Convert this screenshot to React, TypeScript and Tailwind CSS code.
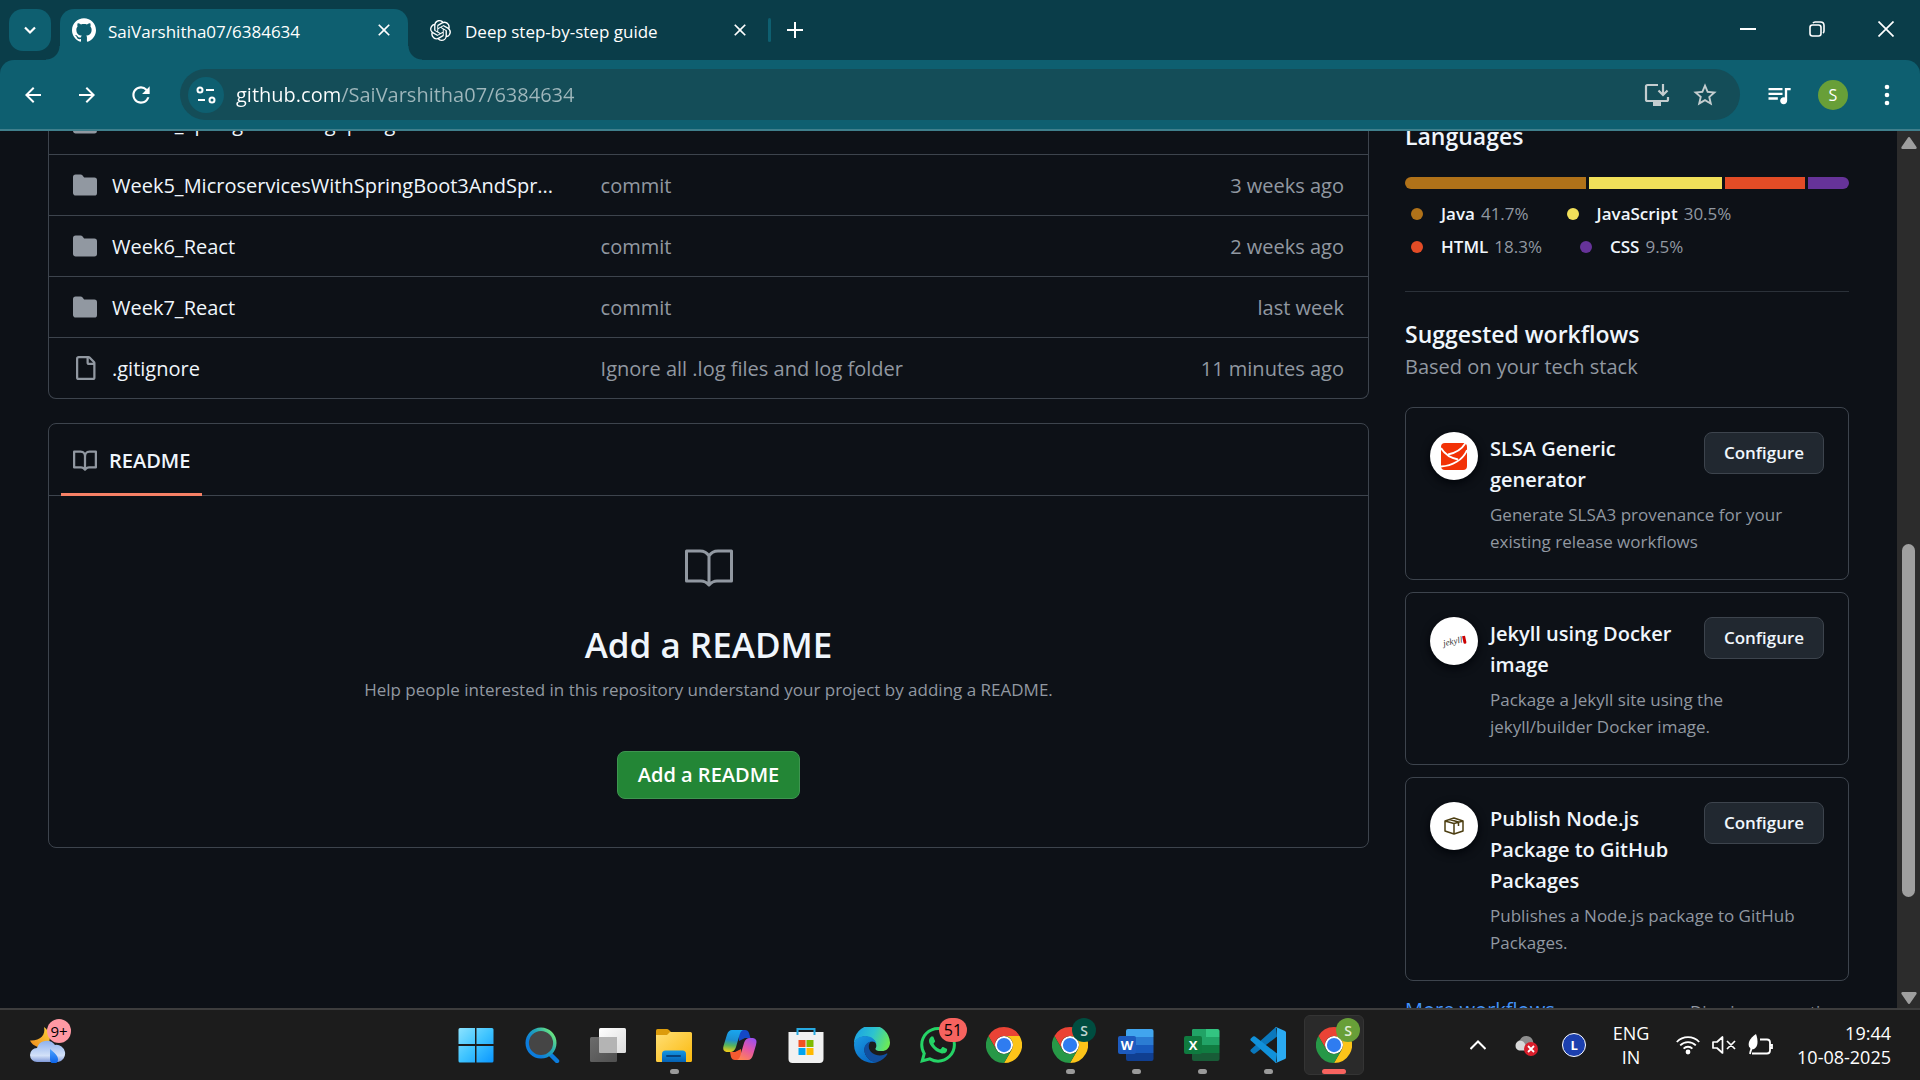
import type { ReactNode } from "react";
import { SiGithub, SiOpenai, SiWhatsapp } from "react-icons/si";
import { MdArrowBack, MdArrowForward, MdClose, MdQueueMusic, MdRefresh, MdStarOutline } from "react-icons/md";

/* ---------- Browser chrome ---------- */

function TabStrip() {
  return (
    <header className="flex h-[60px] shrink-0 items-stretch bg-[#0a3d49] text-white">
      <button aria-label="Search tabs" className="mt-[9px] ml-[9px] flex size-[42px] items-center justify-center rounded-[14px] bg-[#0e5f70]">
        <svg viewBox="0 0 16 16" className="size-4" fill="none" stroke="currentColor" strokeWidth="2.2">
          <path d="M3 5.5 8 10.5 13 5.5" />
        </svg>
      </button>
      <div className="relative mt-[9px] ml-[9px] flex w-[348px] items-center rounded-t-[14px] bg-[#0e5f70] pr-3 pl-3">
        <span className="absolute bottom-0 -left-[14px] size-[14px] bg-[radial-gradient(circle_at_0_0,transparent_13px,#0e5f70_14px)]" />
        <span className="absolute -right-[14px] bottom-0 size-[14px] bg-[radial-gradient(circle_at_100%_0,transparent_13px,#0e5f70_14px)]" />
        <SiGithub className="mb-[9px] size-6" />
        <span className="mb-[6px] ml-3 flex-1 text-[17px]">SaiVarshitha07/6384634</span>
        <button aria-label="Close tab" className="mb-[9px] flex size-6 items-center justify-center">
          <MdClose className="size-5" />
        </button>
      </div>
      <div className="mt-[9px] ml-[22px] flex w-[322px] items-center">
        <SiOpenai className="mb-[9px] size-[21px]" />
        <span className="mb-[6px] ml-[14px] flex-1 text-[17px]">Deep step-by-step guide</span>
        <button aria-label="Close tab" className="mb-[9px] flex size-6 items-center justify-center">
          <MdClose className="size-5" />
        </button>
      </div>
      <span className="mt-[18px] ml-4 h-6 w-[3px] rounded bg-[#0e5f70]" />
      <button aria-label="New tab" className="mt-[18px] ml-3 flex size-6 items-center justify-center">
        <svg viewBox="0 0 16 16" className="size-4" stroke="currentColor" strokeWidth="2">
          <path d="M8 0V16M0 8H16" />
        </svg>
      </button>
      <div className="ml-auto flex h-[58px]">
        <button aria-label="Minimize" className="flex w-[69px] items-center justify-center">
          <svg viewBox="0 0 16 16" className="size-4" stroke="currentColor" strokeWidth="2">
            <path d="M0 8H16" />
          </svg>
        </button>
        <button aria-label="Restore" className="flex w-[69px] items-center justify-center">
          <svg viewBox="0 0 16 16" className="size-4" fill="none" stroke="currentColor" strokeWidth="1.6">
            <rect x="1" y="4" width="11" height="11" rx="2.5" />
            <path d="M4 2.2C4.500 1.300 5 1 6 1H11.500C13.500 1 15 2.500 15 4.500V10C15 11 14.700 11.500 14 12" />
          </svg>
        </button>
        <button aria-label="Close window" className="flex w-[69px] items-center justify-center">
          <svg viewBox="0 0 16 16" className="size-4" stroke="currentColor" strokeWidth="1.700">
            <path d="M.5.500 15.500 15.500M15.500.500.500 15.500" />
          </svg>
        </button>
      </div>
    </header>
  );
}

function Toolbar() {
  return (
    <div className="bg-[#0a3d49]">
      <nav className="flex h-[71px] items-center rounded-t-[14px] border-b-2 border-[#3f7f8c] bg-[#0e5f70] pl-[21px] text-white">
        <button aria-label="Back"><MdArrowBack className="size-6" /></button>
        <button aria-label="Forward" className="ml-[30px]"><MdArrowForward className="size-6" /></button>
        <button aria-label="Reload" className="ml-[29px]"><MdRefresh className="size-[26px]" /></button>
        <div className="ml-[26px] flex h-[51px] flex-1 items-center rounded-full bg-[#144d58] pl-2">
          <button aria-label="Site information" className="flex size-9 items-center justify-center rounded-full bg-[#0e5f70]">
            <svg viewBox="0 0 20 20" className="size-5" fill="none" stroke="currentColor" strokeWidth="2">
              <circle cx="4" cy="5" r="2.500" />
              <path d="M10 5H18M2 15H9" />
              <circle cx="16" cy="15" r="2.500" />
            </svg>
          </button>
          <input
            aria-label="Address"
            defaultValue="github.com/SaiVarshitha07/6384634"
            className="ml-3 min-w-0 flex-1 bg-[linear-gradient(90deg,#ffffff_105px,#9fb7bc_105px)] bg-clip-text text-[20px] text-transparent outline-none"
          />
          <button aria-label="Install" className="text-[#c4cdcf]">
            <svg viewBox="0 0 26 24" className="h-6 w-[26px]" fill="none" stroke="currentColor" strokeWidth="2.200">
              <path d="M14 2H3.500Q2 2 2 3.500V16.500Q2 18 3.500 18H22.500Q24 18 24 16.500V14" />
              <path d="M19 1V11M14.500 7.500 19 12 23.500 7.500" />
              <path d="M9 21H17" strokeWidth="4" />
            </svg>
          </button>
          <button aria-label="Bookmark" className="mx-[21px] text-[#c4cdcf]"><MdStarOutline className="size-7" /></button>
        </div>
        <button aria-label="Media" className="ml-[25px]"><MdQueueMusic className="size-7" /></button>
        <button aria-label="Profile" className="ml-[25px] flex size-[30px] items-center justify-center rounded-full bg-[#689f38] text-[16px]">S</button>
        <button aria-label="Menu" className="mr-[21px] ml-[27px]">
          <svg viewBox="0 0 24 24" className="size-6" fill="currentColor">
            <circle cx="12" cy="4" r="2.300" />
            <circle cx="12" cy="12" r="2.300" />
            <circle cx="12" cy="20" r="2.300" />
          </svg>
        </button>
      </nav>
    </div>
  );
}

/* ---------- Repository page ---------- */

function FolderIcon() {
  return (
    <svg viewBox="0 0 16 16" className="size-6 shrink-0" fill="#9198a1">
      <path d="M1.750 1A1.750 1.750 0 0 0 0 2.750v10.500C0 14.216.784 15 1.750 15h12.500A1.750 1.750 0 0 0 16 13.250v-8.500A1.750 1.750 0 0 0 14.250 3H7.500a.25.25 0 0 1-.2-.1l-.9-1.200C6.070 1.260 5.550 1 5 1H1.750Z" />
    </svg>
  );
}

function FileIcon() {
  return (
    <svg viewBox="0 0 16 16" className="size-6 shrink-0" fill="#9198a1">
      <path d="M2 1.750C2 .784 2.784 0 3.750 0h6.586c.464 0 .909.184 1.237.513l2.914 2.914c.329.328.513.773.513 1.237v9.586A1.750 1.750 0 0 1 13.250 16h-9.500A1.750 1.750 0 0 1 2 14.250Zm1.750-.25a.25.25 0 0 0-.25.25v12.500c0 .138.112.25.25.25h9.500a.25.25 0 0 0 .25-.25V6h-2.750A1.750 1.750 0 0 1 9 4.250V1.500Zm6.750.062V4.250c0 .138.112.25.25.25h2.688l-.011-.013-2.914-2.914-.013-.011Z" />
    </svg>
  );
}

function BookIcon({ size }: { size: string }) {
  return (
    <svg viewBox="0 0 16 16" className={size} fill="#9198a1">
      <path d="M0 1.750A.75.75 0 0 1 .75 1h4.253c1.227 0 2.317.59 3 1.501A3.743 3.743 0 0 1 11.006 1h4.245a.75.75 0 0 1 .75.75v10.500a.75.75 0 0 1-.75.75h-4.507a2.250 2.250 0 0 0-1.591.659l-.622.621a.75.75 0 0 1-1.060 0l-.622-.621A2.250 2.250 0 0 0 5.258 13H.75a.75.75 0 0 1-.75-.75Zm7.251 10.324.004-5.073-.002-2.253A2.250 2.250 0 0 0 5.003 2.500H1.500v9h3.757a3.750 3.750 0 0 1 1.994.574ZM8.755 4.750l-.004 7.322a3.752 3.752 0 0 1 1.992-.572H14.500v-9h-3.495a2.250 2.250 0 0 0-2.250 2.250Z" />
    </svg>
  );
}

function LargeBookIcon() {
  return (
    <svg viewBox="0 0 48 38" className="h-[38px] w-12" fill="none" stroke="#9198a1" strokeWidth="3" strokeLinejoin="round">
      <path d="M24 7Q21 2 15 2H1.500V32H16Q20.500 32 24 36Q27.500 32 32 32H46.500V2H33Q27 2 24 7V34" />
    </svg>
  );
}

const files = [
  { name: "Week4_SpringRestUsingSpringBoot3", message: "commit", age: "last month", folder: true },
  { name: "Week5_MicroservicesWithSpringBoot3AndSpr...", message: "commit", age: "3 weeks ago", folder: true },
  { name: "Week6_React", message: "commit", age: "2 weeks ago", folder: true },
  { name: "Week7_React", message: "commit", age: "last week", folder: true },
  { name: ".gitignore", message: "Ignore all .log files and log folder", age: "11 minutes ago", folder: false },
];

function FileTable() {
  return (
    <div className="rounded-b-lg border border-t-0 border-[#3d444d]">
      <table className="w-full table-fixed text-[20px] leading-[30px]">
        <tbody>
          {files.map((f) => (
            <tr key={f.name} className="h-[61px] border-b border-[#3d444d] last:border-b-0">
              <td className="w-2/5 px-6">
                <div className="flex items-center gap-[15px]">
                  {f.folder ? <FolderIcon /> : <FileIcon />}
                  <a href="#" className="pt-[2px] whitespace-nowrap text-[#f0f6fc]">{f.name}</a>
                </div>
              </td>
              <td className="pt-[2px] pl-6"><a href="#" className="text-[#9198a1]">{f.message}</a></td>
              <td className="w-1/5 pt-[2px] pr-6 text-right text-[#9198a1]">{f.age}</td>
            </tr>
          ))}
        </tbody>
      </table>
    </div>
  );
}

function Readme() {
  return (
    <section className="mt-6 rounded-lg border border-[#3d444d]">
      <div className="flex h-[72px] border-b border-[#3d444d] px-3">
        <a href="#" className="-mb-px flex items-center gap-3 border-b-3 border-[#f78166] px-3 pt-1 text-[20px] font-semibold text-[#f0f6fc]">
          <BookIcon size="size-6" />
          README
        </a>
      </div>
      <div className="flex flex-col items-center pt-[53px] pb-12">
        <LargeBookIcon />
        <h2 className="mt-[31px] text-[35px] leading-[54px] font-semibold text-[#f0f6fc]">Add a README</h2>
        <p className="mt-1 text-[17px] leading-[27px] text-[#9198a1]">
          Help people interested in this repository understand your project by adding a README.
        </p>
        <button className="mt-12 h-12 rounded-lg border border-[#3e9550] bg-[#238636] px-5 text-[20px] font-semibold text-white">
          Add a README
        </button>
      </div>
    </section>
  );
}

const languages = [
  { name: "Java", share: "41.7%", color: "bg-[#b07219]", grow: "grow-[417]" },
  { name: "JavaScript", share: "30.5%", color: "bg-[#f1e05a]", grow: "grow-[305]" },
  { name: "HTML", share: "18.3%", color: "bg-[#e34c26]", grow: "grow-[183]" },
  { name: "CSS", share: "9.5%", color: "bg-[#663399]", grow: "grow-[95]" },
];

function Languages() {
  return (
    <section className="border-b border-[#2b3139] pb-7">
      <h2 className="text-[23px] leading-9 font-semibold text-[#f0f6fc]">Languages</h2>
      <div className="mt-[23px] flex h-3 gap-[3px] overflow-hidden rounded-full">
        {languages.map((l) => (
          <span key={l.name} className={`basis-0 ${l.grow} ${l.color}`} />
        ))}
      </div>
      <ul className="mt-2 flex flex-wrap text-[17px] leading-[33px]">
        {languages.map((l) => (
          <li key={l.name} className="mr-8 flex items-center pl-[6px]">
            <span className={`mr-[18px] size-3 rounded-full ${l.color}`} />
            <span className="font-semibold text-[#f0f6fc]">{l.name}</span>
            <span className="ml-[6px] text-[#9198a1]">{l.share}</span>
          </li>
        ))}
      </ul>
    </section>
  );
}

function SlsaLogo() {
  return (
    <svg viewBox="0 0 26 27" className="h-[27px] w-[26px]">
      <rect width="26" height="27" rx="4" fill="#f23207" />
      <g fill="none" stroke="#fff" strokeWidth="1.800">
        <path d="M0 5C4 12 10 15 17 16.500" />
        <path d="M7 11.500C14 10 21 6 24.500 0" />
        <path d="M0 23.500C11 23 22 17 26 7" />
      </g>
    </svg>
  );
}

function JekyllLogo() {
  return (
    <span className="flex -rotate-12 items-center font-['Liberation_Serif',serif] text-[9px] leading-none text-[#333] italic">
      jekyll
      <span className="h-2 w-[3px] rounded-b bg-[#c00]" />
    </span>
  );
}

function PackageLogo() {
  return (
    <svg viewBox="0 0 20 18" className="h-[18px] w-5" fill="none" stroke="#4d3f12" strokeWidth="1.500" strokeLinejoin="round">
      <path d="M1 4 10 1 19 4V14L10 17 1 14ZM1 4 10 6.500 19 4M10 6.500V17M5.500 2.500 14.500 5V9" />
    </svg>
  );
}

const workflows = [
  { title: "SLSA Generic generator", text: "Generate SLSA3 provenance for your existing release workflows", logo: <SlsaLogo /> },
  { title: "Jekyll using Docker image", text: "Package a Jekyll site using the jekyll/builder Docker image.", logo: <JekyllLogo /> },
  { title: "Publish Node.js Package to GitHub Packages", text: "Publishes a Node.js package to GitHub Packages.", logo: <PackageLogo /> },
];

function Workflows() {
  return (
    <section className="pt-6">
      <h2 className="text-[23px] leading-9 font-semibold text-[#f0f6fc]">Suggested workflows</h2>
      <p className="text-[20px] leading-[30px] text-[#9198a1]">Based on your tech stack</p>
      <div className="mt-[25px] flex flex-col gap-3">
        {workflows.map((w) => (
          <article key={w.title} className="flex gap-3 rounded-lg border border-[#3d444d] p-6">
            <div className="flex size-12 shrink-0 items-center justify-center rounded-full bg-white shadow-[0_3px_8px_#010409]">{w.logo}</div>
            <div className="flex-1">
              <div className="flex items-start">
                <h3 className="max-w-[200px] flex-1 pt-px text-[20px] leading-[31px] font-semibold text-[#f0f6fc]">{w.title}</h3>
                <button className="ml-auto h-[42px] w-[120px] rounded-lg border border-[#3d444d] bg-[#212830] text-[17px] font-semibold text-[#f0f6fc]">
                  Configure
                </button>
              </div>
              <p className="mt-[6px] text-[17px] leading-[27px] text-[#9198a1]">{w.text}</p>
            </div>
          </article>
        ))}
      </div>
      <div className="mt-[14px] flex justify-between text-[17px] leading-[30px]">
        <a href="#" className="text-[20px] text-[#4493f8]">More workflows</a>
        <a href="#" className="pt-[2px] text-[#9198a1]">Dismiss suggestions</a>
      </div>
    </section>
  );
}

function Scrollbar() {
  return (
    <div className="flex w-[23px] shrink-0 flex-col items-center bg-[#2c2c2c] pt-[6px] pb-1" aria-hidden="true">
      <svg viewBox="0 0 16 12" className="h-3 w-4" fill="#9f9f9f"><path d="M8 0C8.600 0 9 .4 9.300.900L15.500 10C16 11 15.500 12 14.500 12H1.500C.5 12 0 11 .5 10L6.700.900C7 .4 7.400 0 8 0Z" /></svg>
      <div className="flex w-full grow-[395] basis-0" />
      <div className="w-[13px] grow-[353] basis-0 rounded-full bg-[#9f9f9f]" />
      <div className="flex w-full grow-[95] basis-0" />
      <svg viewBox="0 0 16 12" className="h-3 w-4 rotate-180" fill="#9f9f9f"><path d="M8 0C8.600 0 9 .4 9.300.900L15.500 10C16 11 15.500 12 14.500 12H1.500C.5 12 0 11 .5 10L6.700.900C7 .4 7.400 0 8 0Z" /></svg>
    </div>
  );
}

/* ---------- Taskbar ---------- */

function Weather() {
  return (
    <button aria-label="Weather" className="relative ml-[30px] size-9">
      <svg viewBox="0 0 36 36" className="size-9">
        <defs>
          <linearGradient id="moon" x1="1" y1="0" x2="0" y2="1"><stop stopColor="#fbd13c" /><stop offset="1" stopColor="#f08c1c" /></linearGradient>
          <linearGradient id="cloud" x1="0" y1="0" x2="0" y2="1"><stop stopColor="#8fb2ee" /><stop offset=".7" stopColor="#d3e1f8" /><stop offset="1" stopColor="#7f98d8" /></linearGradient>
          <linearGradient id="drop" x1="0" y1="0" x2="0" y2="1"><stop stopColor="#4da3ff" /><stop offset="1" stopColor="#0a62e8" /></linearGradient>
        </defs>
        <path d="M14 0C16 8 10 14 0 13.500C3 20 11 22 17 18C22 13 20 4 14 0Z" fill="url(#moon)" />
        <path d="M7 21A10 9.500 0 0 1 25 18A8.500 8.500 0 0 1 28 35H7A7 7 0 0 1 7 21Z" fill="url(#cloud)" />
        <path d="M20 22C24 25 28 29 28 32A4 4 0 0 1 20 33Z" fill="url(#drop)" />
      </svg>
      <span className="absolute -top-2 left-[17px] flex size-6 items-center justify-center rounded-full bg-[#ff99a4] text-[15px] text-black">9+</span>
    </button>
  );
}

function StartIcon() {
  return (
    <svg viewBox="0 0 36 36" className="size-9">
      <defs><linearGradient id="win" x1="0" y1="0" x2="1" y2="1"><stop stopColor="#8ce3ff" /><stop offset=".5" stopColor="#3fc4ff" /><stop offset="1" stopColor="#0a96ff" /></linearGradient></defs>
      <path fill="url(#win)" d="M2 1H17V17H.5V2.500Q.5 1 2 1ZM18.500 1H34Q35.500 1 35.500 2.500V17H18.500ZM.5 19H17V35.500H2Q.5 35.500.500 34ZM18.500 19H35.500V34Q35.500 35.500 34 35.500H18.500Z" />
    </svg>
  );
}

function SearchIcon() {
  return (
    <svg viewBox="0 0 36 36" className="size-9">
      <defs><linearGradient id="lens" x1="1" y1="0" x2="0" y2=".8"><stop offset=".1" stopColor="#6ee87c" /><stop offset=".45" stopColor="#22a5b8" /><stop offset=".8" stopColor="#0c7cdc" /></linearGradient></defs>
      <path d="M26 27 33 34" stroke="#0c7cdc" strokeWidth="4.500" strokeLinecap="round" />
      <circle cx="17" cy="16" r="13.800" fill="#454545" stroke="url(#lens)" strokeWidth="3.400" />
    </svg>
  );
}

function TaskViewIcon() {
  return (
    <svg viewBox="0 0 36 36" className="size-9">
      <defs>
        <linearGradient id="tvA" x1="0" y1="0" x2="1" y2="1"><stop stopColor="#fff" /><stop offset="1" stopColor="#dcdcdc" /></linearGradient>
        <linearGradient id="tvB" x1="0" y1="0" x2="1" y2="1"><stop stopColor="#6c6c6c" /><stop offset="1" stopColor="#505050" /></linearGradient>
      </defs>
      <rect x="9" y="1" width="27" height="25" rx="1.500" fill="url(#tvA)" />
      <rect x="0" y="10" width="27" height="25" rx="1.500" fill="url(#tvB)" />
      <path d="M9 10H26Q27 10 27 11V26H10Q9 26 9 25Z" fill="#b4b4b4" />
    </svg>
  );
}

function ExplorerIcon() {
  return (
    <svg viewBox="0 0 36 36" className="size-9">
      <defs>
        <linearGradient id="fold" x1="0" y1="0" x2="1" y2="1"><stop stopColor="#ffdf75" /><stop offset="1" stopColor="#fbb90d" /></linearGradient>
        <linearGradient id="foldB" x1="0" y1="0" x2="0" y2="1"><stop stopColor="#1497e4" /><stop offset="1" stopColor="#0561b4" /></linearGradient>
      </defs>
      <path d="M0 3.500Q0 2 1.500 2H11Q12 2 13 3L16 6V12H0Z" fill="#dc9c0c" />
      <path d="M0 8H11L14 5H34.500Q36 5 36 6.500V33.500Q36 35 34.500 35H1.500Q0 35 0 33.500Z" fill="url(#fold)" />
      <path d="M6 35V27Q6 23.500 9.500 23.500H26.500Q30 23.500 30 27V35Z" fill="url(#foldB)" />
      <rect x="10" y="28" width="15" height="2" rx="1" fill="#06427c" />
    </svg>
  );
}

function CopilotIcon() {
  return (
    <svg viewBox="0 0 36 36" className="size-9">
      <defs>
        <linearGradient id="cpA" x1=".4" y1="0" x2=".3" y2="1"><stop stopColor="#19a5ee" /><stop offset=".45" stopColor="#1d8fd0" /><stop offset=".7" stopColor="#56b35d" /><stop offset="1" stopColor="#f4cd17" /></linearGradient>
        <linearGradient id="cpB" x1=".8" y1="0" x2=".3" y2="1"><stop stopColor="#9a4ff0" /><stop offset=".5" stopColor="#e356a6" /><stop offset="1" stopColor="#ff8256" /></linearGradient>
      </defs>
      <path d="M16 3H23Q26 3 27 6L28.500 11H23L17 14Z" fill="#1548c7" />
      <path d="M20 33H13Q10 33 9 30L8 25H13L19 22Z" fill="#f45a30" />
      <path d="M10 3H21Q18.500 4 17.500 8L14 20Q12.500 25 8 25H4.500Q0 24 1.500 19L5 7.500Q6.500 3 10 3Z" fill="url(#cpA)" />
      <path d="M26 33H15Q17.500 32 18.500 28L22 16Q23.500 11 28 11H31Q36 12 34 18L31 28Q29.500 33 26 33Z" fill="url(#cpB)" />
    </svg>
  );
}

function StoreIcon() {
  return (
    <svg viewBox="0 0 36 36" className="size-9">
      <path d="M.5 5H35.500V32Q35.500 36 31.500 36H4.500Q.5 36 .5 32Z" fill="#f1f1f1" />
      <path d="M9.500 8V2H26.500V8" fill="none" stroke="#27a9e1" strokeWidth="2" />
      <path fill="#f25022" d="M10.500 13h7v7h-7z" /><path fill="#7fba00" d="M18.500 13h7v7h-7z" />
      <path fill="#00a4ef" d="M10.500 21h7v7h-7z" /><path fill="#ffb900" d="M18.500 21h7v7h-7z" />
    </svg>
  );
}

function EdgeIcon() {
  return (
    <svg viewBox="0 0 36 36" className="size-9">
      <defs>
        <linearGradient id="edA" x1="0" y1=".3" x2="1" y2=".6"><stop stopColor="#1ba2e4" /><stop offset=".5" stopColor="#2dc3cf" /><stop offset="1" stopColor="#6bea56" /></linearGradient>
        <linearGradient id="edB" x1="0" y1="0" x2=".7" y2="1"><stop stopColor="#1a9be4" /><stop offset="1" stopColor="#0967c2" /></linearGradient>
      </defs>
      <path d="M0 17A18 18 0 0 1 36 15.500C36 22 31 24.500 27 24C23 24 21 23 21.500 21.500C24 18 21 11 12 9.500C6 9.500 1.500 12 0 17Z" fill="url(#edA)" />
      <path d="M0 18C0 12.500 5.500 9 11 9C18 9 22 13.500 22.500 17C19 12 12 15 10.500 22C10 29 16 35 23 35.200A18 18 0 0 1 0 18Z" fill="url(#edB)" />
      <path d="M16.500 14.500C11 16 9.500 21 10.500 25C12 31 17 35.300 23 35.200C28 33.500 31.500 30.500 33.500 27C33 26 32 27 30 27.800C23 30 15 26 14.800 20C14.700 17.500 15.500 16 16.500 14.500Z" fill="#114f9f" />
    </svg>
  );
}

function ChromeIcon() {
  return (
    <svg viewBox="0 0 48 48" className="size-9">
      <circle cx="24" cy="24" r="12" fill="#fff" />
      <path d="M24 12H44.781a23.994 23.994 0 0 0-41.564.003L13.608 30l.009-.002A11.985 11.985 0 0 1 24 12Z" fill="#ea4335" />
      <path d="M34.391 30.003 24.001 48A23.994 23.994 0 0 0 44.780 12.003H23.999l-.003.009A11.985 11.985 0 0 1 34.391 30.003Z" fill="#fcc419" />
      <path d="M13.609 30.003 3.218 12.006A23.994 23.994 0 0 0 24.003 48L34.393 30.003l-.007-.007a11.985 11.985 0 0 1-20.778.007Z" fill="#279847" />
      <circle cx="24" cy="24" r="9.500" fill="#2f7cf0" />
    </svg>
  );
}

function OfficeIcon({ letter, shades, tile }: { letter: string; shades: string[]; tile: string }) {
  return (
    <span className="relative flex size-9 items-center">
      <svg viewBox="0 0 36 36" className="size-9">
        <clipPath id={`page-${letter}`}><rect x="8" y="2" width="27.500" height="32" rx="2" /></clipPath>
        <g clipPath={`url(#page-${letter})`}>
          {shades.map((c, i) => (
            <rect key={i} x="8" y={2 + i * 8} width="28" height="8" fill={c} />
          ))}
          {letter === "X" && <path d="M8 2h14v16H8z" fill="#21a366" />}
          {letter === "X" && <path d="M8 18h14v8H8z" fill="#107c41" />}
        </g>
        <rect x="0" y="9" width="18" height="18" rx="2" fill={tile} />
      </svg>
      <span className="absolute left-0 w-[18px] text-center text-[13px] leading-[18px] font-bold text-white">{letter}</span>
    </span>
  );
}

function CodeIcon() {
  return (
    <svg viewBox="0 0 36 36" className="size-9">
      <path d="M26 0 27 9.500 5 26.500Q4 27 3 26.500L.8 24.500Q0 23.500.8 22.500L25 .8Z" fill="#0a78bd" />
      <path d="M26 36 27 26.500 5 9.500Q4 9 3 9.500L.8 11.500Q0 12.500.8 13.500L25 35.200Z" fill="#1191da" />
      <path d="M26 0 35 4Q36 4.500 36 5.500V30.500Q36 31.500 35 32L26 36Q25.500 36 25 35.500Q27 36 27 34V2Q27 0 25 .5Q25.500 0 26 0Z" fill="#2aaaf2" />
    </svg>
  );
}

type AppItem = { label: string; icon: ReactNode; state?: "open" | "active"; badge?: ReactNode };

const apps: AppItem[] = [
  { label: "Start", icon: <StartIcon /> },
  { label: "Search", icon: <SearchIcon /> },
  { label: "Task view", icon: <TaskViewIcon /> },
  { label: "File Explorer", icon: <ExplorerIcon />, state: "open" },
  { label: "Copilot", icon: <CopilotIcon /> },
  { label: "Microsoft Store", icon: <StoreIcon /> },
  { label: "Edge", icon: <EdgeIcon /> },
  {
    label: "WhatsApp",
    icon: <SiWhatsapp className="size-9 text-[#25d366]" />,
    badge: <span className="absolute top-2 right-1 flex h-6 w-7 items-center justify-center rounded-full bg-[#f7635f] text-[16px] text-black">51</span>,
  },
  { label: "Chrome", icon: <ChromeIcon /> },
  {
    label: "Chrome profile",
    icon: <ChromeIcon />,
    state: "open",
    badge: <span className="absolute top-2 right-[7px] flex size-6 items-center justify-center rounded-full bg-[#004d40] text-[14px] font-semibold text-[#c3d5d2]">S</span>,
  },
  { label: "Word", icon: <OfficeIcon letter="W" shades={["#41a5ee", "#2b7cd3", "#185abd", "#103f91"]} tile="#1d5bbf" />, state: "open" },
  { label: "Excel", icon: <OfficeIcon letter="X" shades={["#33c481", "#21a366", "#107c41", "#185c37"]} tile="#0f7a3f" />, state: "open" },
  { label: "Visual Studio Code", icon: <CodeIcon />, state: "open" },
  {
    label: "Chrome profile, active",
    icon: <ChromeIcon />,
    state: "active",
    badge: <span className="absolute top-2 right-[7px] flex size-6 items-center justify-center rounded-full bg-[#689f38] text-[14px] font-semibold text-[#e0ecd6]">S</span>,
  },
];

function TaskbarApp({ item }: { item: AppItem }) {
  const active = item.state === "active";
  return (
    <button aria-label={item.label} className="relative flex h-[70px] w-[66px] items-center justify-center">
      {active && <span className="absolute inset-x-[3px] inset-y-[5px] rounded-md border border-[#343434] bg-[#2a2a2a]" />}
      <span className="relative">{item.icon}</span>
      {item.badge}
      {item.state && (
        <span className={`absolute bottom-[6px] h-[5px] rounded-full ${active ? "w-6 bg-[#f7635f]" : "w-[9px] bg-[#9a9a9a]"}`} />
      )}
    </button>
  );
}

function Tray() {
  return (
    <div className="ml-auto flex items-center pr-[29px] pb-px text-[18px] leading-6 text-white">
      <button aria-label="Show hidden icons">
        <svg viewBox="0 0 16 10" className="h-[10px] w-4" fill="none" stroke="currentColor" strokeWidth="2"><path d="M.5 9 8 1.500 15.500 9" /></svg>
      </button>
      <button aria-label="OneDrive" className="ml-7">
        <svg viewBox="0 0 24 24" className="size-6">
          <path d="M5 17A5.500 5.500 0 0 1 6 7A7 7 0 0 1 19 8L20 16Z" fill="#8d8d8d" />
          <path d="M5 17.500A5 5 0 0 1 5 8C9 7 12 10 13 17.500Z" fill="#d8d8d8" />
          <circle cx="17" cy="16" r="7" fill="#d91e2b" />
          <path d="M14 13 20 19M20 13 14 19" stroke="#fff" strokeWidth="1.800" />
        </svg>
      </button>
      <button aria-label="Account" className="ml-6 flex size-6 items-center justify-center rounded-full border border-white bg-[#1c3fae] text-[13px] font-bold">L</button>
      <button className="ml-6 w-[42px] text-center">ENG<br />IN</button>
      <button aria-label="Wi-Fi" className="ml-6">
        <svg viewBox="0 0 24 20" className="h-5 w-6" fill="none" stroke="currentColor" strokeWidth="1.800">
          <path d="M.8 7A15.500 15.500 0 0 1 23.200 7M4.200 10.300A11 11 0 0 1 19.800 10.300M7.600 13.600A6.200 6.200 0 0 1 16.400 13.600" />
          <circle cx="12" cy="17" r="1.500" fill="currentColor" />
        </svg>
      </button>
      <button aria-label="Volume muted" className="ml-3">
        <svg viewBox="0 0 24 18" className="h-[18px] w-6" fill="none" stroke="currentColor" strokeWidth="1.700" strokeLinejoin="round">
          <path d="M1 6H5L10.500 1V17L5 12H1ZM15 5 23 13M23 5 15 13" />
        </svg>
      </button>
      <button aria-label="Battery" className="ml-3">
        <svg viewBox="0 0 25 22" className="h-[22px] w-[25px]" fill="none" stroke="currentColor" strokeWidth="1.800">
          <path d="M12 5.500H19Q22 5.500 22 8.500V16.500Q22 19.500 19 19.500H4" />
          <path d="M22 11H24V14H22" />
          <path d="M8 0C1 5 0 9 1 12.500Q2.500 16 6 15C10 13 10.500 7 8 0Z" fill="currentColor" stroke="none" />
          <path d="M2 20Q3 14 6 11" />
        </svg>
      </button>
      <button className="ml-6 text-right">19:44<br />10-08-2025</button>
    </div>
  );
}

function Taskbar() {
  return (
    <footer className="flex h-[72px] shrink-0 items-center border-t-2 border-[#3d3d3d] bg-[#1c1c1c]">
      <div className="flex w-[443px]"><Weather /></div>
      <div className="flex">
        {apps.map((a) => <TaskbarApp key={a.label} item={a} />)}
      </div>
      <Tray />
    </footer>
  );
}

export default function App() {
  return (
    <div className="flex h-screen flex-col overflow-hidden bg-[#0d1117] font-['Open_Sans','Noto_Sans',sans-serif]">
      <TabStrip />
      <Toolbar />
      <div className="flex min-h-0 flex-1 overflow-hidden">
        <main className="-mt-[38px] flex flex-1 items-start gap-9 px-12">
          <div className="min-w-0 flex-1">
            <FileTable />
            <Readme />
          </div>
          <aside className="w-[444px] shrink-0 pt-[25px]">
            <Languages />
            <Workflows />
          </aside>
        </main>
        <Scrollbar />
      </div>
      <Taskbar />
    </div>
  );
}
